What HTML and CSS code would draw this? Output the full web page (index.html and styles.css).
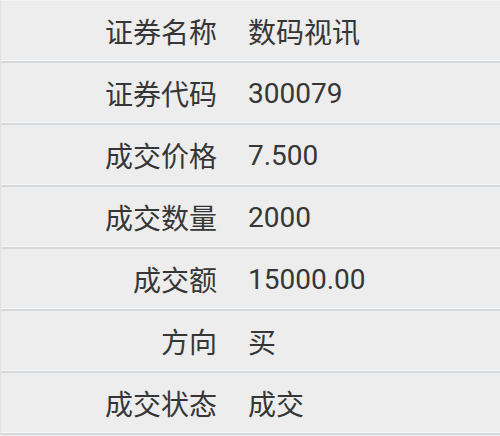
FILE: index.html
```html
<!DOCTYPE html>
<html lang="zh-CN">
<head>
<meta charset="utf-8">
<link rel="stylesheet" href="styles.css">
</head>
<body>
<div class="list">
  <div class="row"><span class="label">证券名称</span><span class="value">数码视讯</span></div>
  <div class="row"><span class="label">证券代码</span><span class="value">300079</span></div>
  <div class="row"><span class="label">成交价格</span><span class="value">7.500</span></div>
  <div class="row"><span class="label">成交数量</span><span class="value">2000</span></div>
  <div class="row"><span class="label">成交额</span><span class="value">15000.00</span></div>
  <div class="row"><span class="label">方向</span><span class="value">买</span></div>
  <div class="row"><span class="label">成交状态</span><span class="value">成交</span></div>
</div>
</body>
</html>
```
FILE: styles.css
```css
html, body {
  margin: 0;
  padding: 0;
  background: #ededed;
}
.list {
  display: flex;
  flex-direction: column;
  border-left: 1px solid #e2e2e2;
  border-top: 1px solid #f6f6f6;
  font-family: Roboto, "Noto Sans CJK SC", sans-serif;
  font-size: 28px;
  color: #363636;
}
.row {
  display: grid;
  grid-template-columns: 216px 1fr;
  column-gap: 31px;
  align-items: center;
  height: 60px;
  border-bottom: 2px solid #d6d9dc;
  box-shadow: inset 0 -1px 0 #f7f7f7;
}
.label {
  text-align: right;
}
.value {
  text-align: left;
}
```
